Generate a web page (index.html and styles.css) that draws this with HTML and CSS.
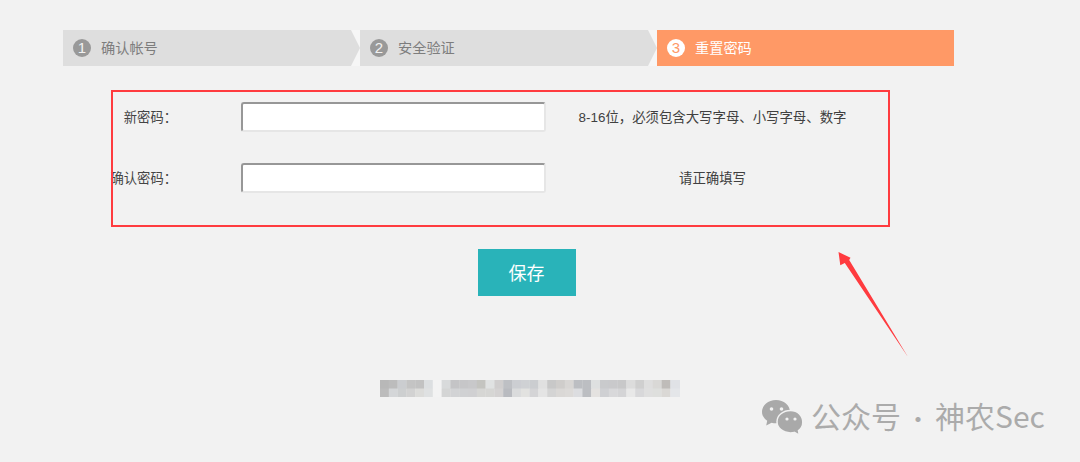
FILE: index.html
```html
<!DOCTYPE html>
<html lang="zh-CN">
<head>
<meta charset="utf-8">
<title>重置密码</title>
<link rel="stylesheet" href="styles.css">
</head>
<body>
<main class="page">
  <ol class="steps">
    <li class="step"><span class="step-num">1</span><span class="step-label">确认帐号</span></li>
    <li class="step"><span class="step-num">2</span><span class="step-label">安全验证</span></li>
    <li class="step step-active"><span class="step-num">3</span><span class="step-label">重置密码</span></li>
  </ol>
  <form class="form">
    <label class="form-label" for="pw1">新密码：</label>
    <input class="form-input" id="pw1" type="password">
    <span class="form-hint">8-16位，必须包含大写字母、小写字母、数字</span>
    <label class="form-label" for="pw2">确认密码：</label>
    <input class="form-input" id="pw2" type="password">
    <span class="form-hint">请正确填写</span>
  </form>
  <div class="actions"><button class="save" type="button">保存</button></div>
  <svg class="mosaic" width="300" height="17" viewBox="0 0 300 17" aria-hidden="true">
    <g>
      <rect x="0" y="0" width="9" height="9" fill="#b8b8b8"/><rect x="8.800" y="0" width="9" height="9" fill="#bcbcbc"/><rect x="17.600" y="0" width="9" height="9" fill="#cbcdd0"/><rect x="26.400" y="0" width="9" height="9" fill="#c4c4c4"/><rect x="35.200" y="0" width="9" height="9" fill="#c2c2c2"/><rect x="44" y="0" width="9" height="9" fill="#dcdfe1"/><rect x="52.800" y="0" width="9" height="9" fill="#f3f3f3"/><rect x="61.600" y="0" width="9" height="9" fill="#d8dadb"/><rect x="70.400" y="0" width="9" height="9" fill="#c4c4c6"/><rect x="79.200" y="0" width="9" height="9" fill="#c6c6c8"/><rect x="88" y="0" width="9" height="9" fill="#c8c8ca"/><rect x="96.800" y="0" width="9" height="9" fill="#c4c4c0"/><rect x="105.600" y="0" width="9" height="9" fill="#e0e2e2"/><rect x="114.400" y="0" width="9" height="9" fill="#d0cece"/><rect x="123.200" y="0" width="9" height="9" fill="#bec0c4"/><rect x="132" y="0" width="9" height="9" fill="#ccced2"/><rect x="140.800" y="0" width="9" height="9" fill="#cfd1d4"/><rect x="149.600" y="0" width="9" height="9" fill="#cbcdd0"/><rect x="158.400" y="0" width="9" height="9" fill="#e0e0e0"/><rect x="167.200" y="0" width="9" height="9" fill="#c8c8c8"/><rect x="176" y="0" width="9" height="9" fill="#cfcdcb"/><rect x="184.800" y="0" width="9" height="9" fill="#d8d6d4"/><rect x="193.600" y="0" width="9" height="9" fill="#bcbec2"/><rect x="202.400" y="0" width="9" height="9" fill="#bcbec2"/><rect x="211.200" y="0" width="9" height="9" fill="#dee0e0"/><rect x="220" y="0" width="9" height="9" fill="#c9cacc"/><rect x="228.800" y="0" width="9" height="9" fill="#c9c9cb"/><rect x="237.600" y="0" width="9" height="9" fill="#c8c8c9"/><rect x="246.400" y="0" width="9" height="9" fill="#dcdcdc"/><rect x="255.200" y="0" width="9" height="9" fill="#cfcfcf"/><rect x="264" y="0" width="9" height="9" fill="#dedede"/><rect x="272.800" y="0" width="9" height="9" fill="#d9d8d6"/><rect x="281.600" y="0" width="9" height="9" fill="#bfbcb9"/><rect x="290.400" y="0" width="9.600" height="9" fill="#e0e2e6"/>
      <rect x="0" y="8.500" width="9" height="8.500" fill="#bcbcbc"/><rect x="8.800" y="8.500" width="9" height="8.500" fill="#d4d6d8"/><rect x="17.600" y="8.500" width="9" height="8.500" fill="#cdcfd0"/><rect x="26.400" y="8.500" width="9" height="8.500" fill="#d2d2d2"/><rect x="35.200" y="8.500" width="9" height="8.500" fill="#dcdcda"/><rect x="44" y="8.500" width="9" height="8.500" fill="#dfe1e2"/><rect x="52.800" y="8.500" width="9" height="8.500" fill="#f3f3f3"/><rect x="61.600" y="8.500" width="9" height="8.500" fill="#d4d5d5"/><rect x="70.400" y="8.500" width="9" height="8.500" fill="#d2d3d5"/><rect x="79.200" y="8.500" width="9" height="8.500" fill="#d0d1d3"/><rect x="88" y="8.500" width="9" height="8.500" fill="#d0d0d2"/><rect x="96.800" y="8.500" width="9" height="8.500" fill="#d6d6d4"/><rect x="105.600" y="8.500" width="9" height="8.500" fill="#d6d6d4"/><rect x="114.400" y="8.500" width="9" height="8.500" fill="#d4d2d2"/><rect x="123.200" y="8.500" width="9" height="8.500" fill="#b9bbc0"/><rect x="132" y="8.500" width="9" height="8.500" fill="#dadbdc"/><rect x="140.800" y="8.500" width="9" height="8.500" fill="#e2e2e0"/><rect x="149.600" y="8.500" width="9" height="8.500" fill="#d4d4d6"/><rect x="158.400" y="8.500" width="9" height="8.500" fill="#e4e4e4"/><rect x="167.200" y="8.500" width="9" height="8.500" fill="#d4d4d4"/><rect x="176" y="8.500" width="9" height="8.500" fill="#dad8d6"/><rect x="184.800" y="8.500" width="9" height="8.500" fill="#dcdad8"/><rect x="193.600" y="8.500" width="9" height="8.500" fill="#dcdde0"/><rect x="202.400" y="8.500" width="9" height="8.500" fill="#bcbec2"/><rect x="211.200" y="8.500" width="9" height="8.500" fill="#e4e2e0"/><rect x="220" y="8.500" width="9" height="8.500" fill="#cfd0d3"/><rect x="228.800" y="8.500" width="9" height="8.500" fill="#d8d8da"/><rect x="237.600" y="8.500" width="9" height="8.500" fill="#d4d4d6"/><rect x="246.400" y="8.500" width="9" height="8.500" fill="#e8e8e8"/><rect x="255.200" y="8.500" width="9" height="8.500" fill="#d8d8da"/><rect x="264" y="8.500" width="9" height="8.500" fill="#dfdfdf"/><rect x="272.800" y="8.500" width="9" height="8.500" fill="#dedfdd"/><rect x="281.600" y="8.500" width="9" height="8.500" fill="#dad8d5"/><rect x="290.400" y="8.500" width="9.600" height="8.500" fill="#e4e6e9"/>
    </g>
  </svg>
</main>
<div class="callout-box"></div>
<svg class="callout-arrow" width="80" height="112" viewBox="835 250 80 112" aria-hidden="true">
  <polygon points="838.500,252 850.500,257.800 849.200,260 908,357 844.800,263 840.300,265.300" fill="#ff3b3f"/>
</svg>
<div class="watermark">
  <svg class="wechat" width="42" height="38" viewBox="761 399 42 38" aria-hidden="true">
    <path d="M776 400c-7.900 0-14 5.300-14 11.800 0 3.700 2 6.900 5.200 9l-1 4.700 5.400-2.800c1.400.4 2.900.6 4.400.6 7.900 0 14-5.200 14-11.500S783.900 400 776 400z" fill="#a9a9a9"/>
    <path d="M790.500 410.500c-7.500 0-13.500 4.900-13.500 11.200s6 11.200 13.500 11.200c1.300 0 2.600-.2 3.800-.5l5 2.700-.8-4.500c2.700-2 4.300-5 4.300-8.400 0-6.300-4.800-11.700-12.300-11.700z" fill="#a9a9a9" stroke="#f2f2f2" stroke-width="1.500"/>
    <circle cx="771.500" cy="409" r="1.800" fill="#f2f2f2"/><circle cx="781.500" cy="409" r="1.800" fill="#f2f2f2"/>
    <circle cx="787" cy="419" r="1.600" fill="#f2f2f2"/><circle cx="795" cy="419" r="1.600" fill="#f2f2f2"/>
  </svg>
  <span class="watermark-text">公众号<span class="watermark-dot">·</span>神农Sec</span>
</div>
</body>
</html>
```

FILE: styles.css
```css
* { box-sizing: border-box; }
html, body { margin: 0; height: 100%; }
body {
  position: relative;
  overflow: hidden;
  background: #f2f2f2;
  color: #444;
  font-family: "Liberation Sans", "Noto Sans CJK SC", sans-serif;
  font-size: 13.3px;
}
.page { padding: 30px 126px 0 63px; }

.steps {
  display: flex;
  margin: 0;
  padding: 0;
  list-style: none;
}
.step {
  position: relative;
  isolation: isolate;
  flex: 0 0 297px;
  height: 36px;
  display: flex;
  align-items: center;
  gap: 10px;
  padding-left: 10px;
  background: #f6f6f6;
  color: #7d7d7d;
  font-size: 14.2px;
}
.step::before {
  content: "";
  position: absolute;
  inset: 0;
  z-index: -1;
  background: #dedede;
  clip-path: polygon(0 0, calc(100% - 9px) 0, 100% 50%, calc(100% - 9px) 100%, 0 100%);
}
.step-num {
  width: 18px;
  height: 18px;
  border-radius: 50%;
  background: #999;
  color: #f1f1f1;
  font: 15px/18px "Liberation Sans", sans-serif;
  text-align: center;
}
.step-label { padding-bottom: 2px; }
.step-active { background: #ff9966; color: #fff; }
.step-active::before { display: none; }
.step-active .step-num { background: #fff; color: #ff9966; }

.form {
  display: grid;
  grid-template-columns: 130px 305px 333px;
  row-gap: 31px;
  align-items: center;
  margin: 36px 0 0 48px;
}
.form-label { justify-self: end; white-space: nowrap; margin-right: 64px; padding-bottom: 2px; }
.form-input {
  grid-column: 2;
  width: 305px;
  height: 30px;
  margin: 0;
  background: #fff;
  border-width: 2px;
  border-style: solid;
  border-color: #979797 #e6e6e6 #e6e6e6 #979797;
  border-radius: 3px;
}
.form-hint { text-align: center; white-space: nowrap; color: #404040; font-size: 13.4px; padding-bottom: 2px; }

.actions { margin: 56px 0 0 415px; }
.save {
  display: block;
  width: 98px;
  height: 47px;
  border: 0;
  padding: 0 1px 2px 0;
  background: #29b3b9;
  color: #fff;
  font: 18px "Noto Sans CJK SC", sans-serif;
}
.mosaic {
  display: block;
  margin: 84px 0 0 317px;
  filter: blur(0.4px);
}

.callout-box {
  position: absolute;
  left: 111px;
  top: 90px;
  width: 779px;
  height: 137px;
  border: 2px solid #ff3b3f;
}
.callout-arrow { position: absolute; left: 835px; top: 250px; }

.watermark {
  position: absolute;
  left: 761px;
  top: 399px;
  display: flex;
  align-items: center;
  gap: 8px;
  height: 38px;
  color: #ababab;
}
.wechat { flex: none; }
.watermark-text {
  font-family: "Noto Sans CJK SC", sans-serif;
  font-size: 30px;
  line-height: 38px;
  white-space: nowrap;
  padding-bottom: 3px;
}
.watermark-dot { display: inline-block; width: 34px; text-align: center; font-size: 24px; }
```
